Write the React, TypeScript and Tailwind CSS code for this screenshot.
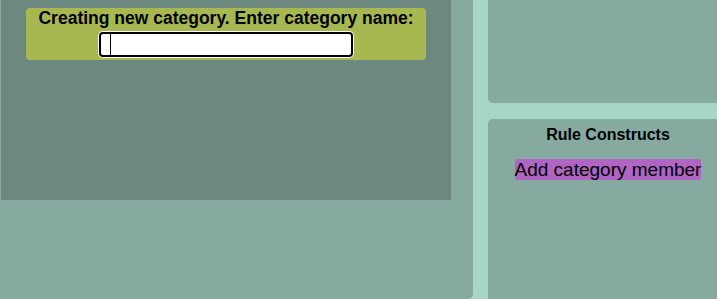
import React from "react";

export default function App() {
  return (
    <div
      className="flex w-[717px] h-[299px] overflow-hidden bg-[#a7d5c7] gap-[15px]"
      style={{ fontFamily: '"Liberation Sans", Arial, sans-serif' }}
    >
      <div className="w-[473px] shrink-0 bg-[#86aa9f] rounded-br-[5px] pl-px">
        <div className="w-[450px] h-[200px] bg-[#6d887f] pt-[8px]">
          <div className="mx-auto w-[400px] h-[52px] bg-[#a8b850] rounded-[4px] flex flex-col items-center">
            <div className="text-[17.5px] font-bold leading-[20px] text-black">
              Creating new category. Enter category name:
            </div>
            <div className="mt-[4px] w-[254px] h-[25px] bg-white border-2 border-black rounded-[4px] shadow-[0_0_0_1px_#ffffff] pl-[9px] flex">
              <div className="w-px h-full bg-black" />
            </div>
          </div>
        </div>
      </div>
      <div className="w-[240px] shrink-0 flex flex-col gap-[16px]">
        <div className="h-[103px] bg-[#86aa9f] rounded-bl-[5px]" />
        <div className="flex-1 bg-[#86aa9f] rounded-tl-[5px] pt-[7px] text-center text-black">
          <div className="text-[16px] font-bold leading-[18px]">Rule Constructs</div>
          <div className="mt-[15px] leading-[22px]">
            <span className="text-[19px] bg-[#b064c4] rounded-[3px]">Add category member</span>
          </div>
        </div>
      </div>
    </div>
  );
}
